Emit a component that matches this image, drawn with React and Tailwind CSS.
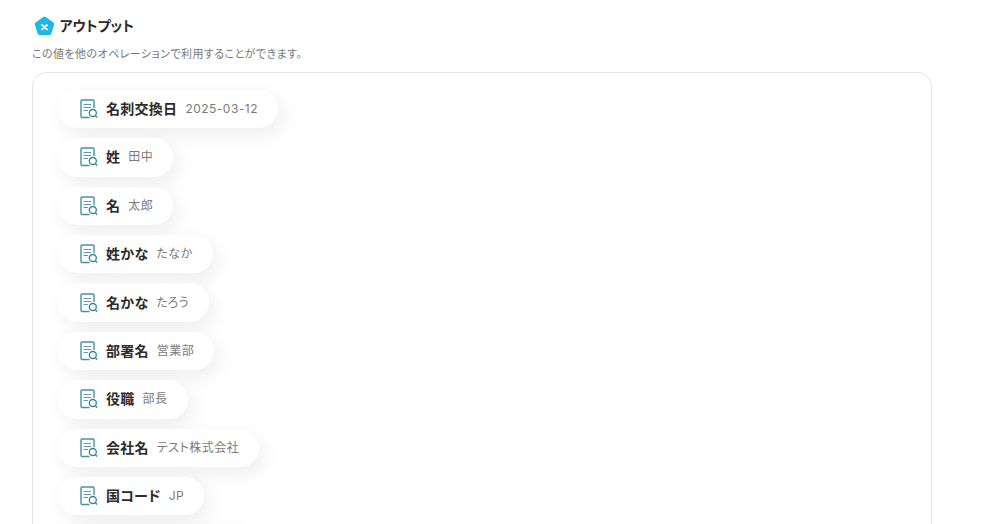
const rows = [
  ["名刺交換日", "2025-03-12"],
  ["姓", "田中"],
  ["名", "太郎"],
  ["姓かな", "たなか"],
  ["名かな", "たろう"],
  ["部署名", "営業部"],
  ["役職", "部長"],
  ["会社名", "テスト株式会社"],
  ["国コード", "JP"],
  ["郵便番号", "100-0001"],
];

function DocIcon() {
  return (
    <svg width="18" height="20" viewBox="0 0 18 20" fill="none" className="shrink-0">
      <path d="M14 9V2.2C14 1.5 13.5 1 12.8 1H2.2C1.5 1 1 1.5 1 2.2V17.3C1 18 1.5 18.5 2.2 18.5H9.5" stroke="#4592a5" strokeWidth="1.4" />
      <path d="M3.5 5.5H11M3.5 8.5H11M3.5 11.5H8" stroke="#5f9aaa" strokeWidth="1.2" />
      <circle cx="12.8" cy="14" r="3.5" stroke="#2f8598" strokeWidth="1.3" />
      <path d="M15.4 16.7L17.2 18.5" stroke="#2f8598" strokeWidth="1.3" />
    </svg>
  );
}

function Pill({ label, value }) {
  return (
    <div className="flex items-center w-fit h-[38.4px] mb-[10px] pl-[21.5px] pr-[20px] bg-white rounded-full shadow-[5px_7px_20px_rgba(0,0,0,0.07)]">
      <DocIcon />
      <span className="ml-[8.5px] text-[14px] font-bold text-[#2b2b2b] tracking-[0.02em] leading-none">{label}</span>
      <span className="ml-[8px] text-[12px] text-[#7a7a7a] tracking-[0.04em] leading-none">{value}</span>
    </div>
  );
}

export default function App() {
  return (
    <div className="h-[524px] overflow-hidden bg-white pl-[32px] pr-[69px] pt-[13px] font-['Inter','Noto_Sans_CJK_JP',sans-serif] [font-feature-settings:'palt']">
      <div className="flex items-center h-[25px] pl-[1.5px]">
        <svg width="21" height="21" viewBox="0 0 21 21" className="shrink-0 mt-[2px]">
          <path d="M9.2 1.1C10 .5 11 .5 11.8 1.1L19.4 6.6C20.1 7.1 20.4 8 20.1 8.8L17.3 17.7C17 18.6 16.2 19.1 15.4 19.1H5.6C4.8 19.1 4 18.6 3.7 17.7L.9 8.8C.6 8 .9 7.1 1.6 6.6Z" fill="#1cb9e6" />
          <path d="M8 9L13 13.4M13 9L8 13.4" stroke="#fff" strokeWidth="1.8" strokeLinecap="round" />
        </svg>
        <span className="ml-[5px] text-[14px] font-bold text-[#2b2b2b] leading-none">アウトプット</span>
      </div>
      <p className="mt-[9px] text-[11px] text-[#777777] tracking-[0.04em] leading-[14px]">この値を他のオペレーションで利用することができます。</p>
      <div className="mt-[11px] border border-[#e5e5e5] rounded-[14px] pl-[25px] pt-[16.8px] h-[600px]">
        {rows.map(([l, v]) => (
          <Pill key={l} label={l} value={v} />
        ))}
      </div>
    </div>
  );
}
